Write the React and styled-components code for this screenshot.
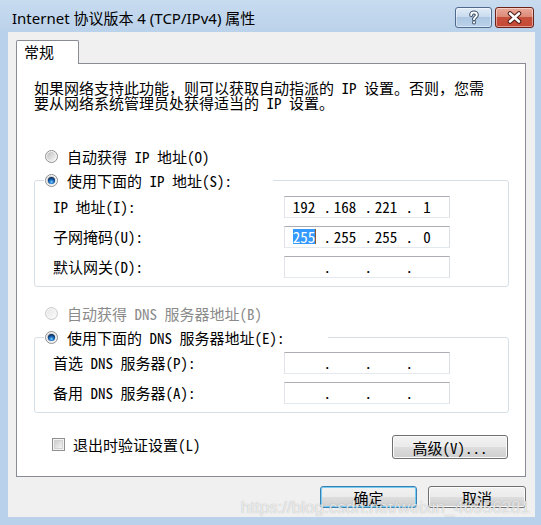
import React from 'react';
import styled, { createGlobalStyle } from 'styled-components';

const uiFont = `"Noto Sans Mono CJK SC", "Noto Sans CJK SC", monospace`;

const GlobalStyle = createGlobalStyle`
  html, body { margin: 0; padding: 0; }
  body { background: #b9d1ea; }
`;

const Window = styled.div`
  position: relative;
  width: 541px;
  height: 525px;
  display: flex;
  flex-direction: column;
  background: #b9d1ea;
  font-family: ${uiFont};
  font-size: 15px;
  color: #000;
  overflow: hidden;
`;

const TitleBar = styled.div`
  height: 32px;
  flex-shrink: 0;
  display: flex;
  justify-content: space-between;
  background: linear-gradient(#c8dbef, #bad2ea);
`;

const Title = styled.div`
  padding: 7px 0 0 12px;
  font-family: "Noto Sans", "Noto Sans CJK SC", sans-serif;
  font-size: 15px;
  line-height: 22px;
`;

const CaptionButtons = styled.div`
  display: flex;
  align-items: flex-start;
  gap: 3px;
  margin: 7px 7px 0 0;
`;

const CaptionButton = styled.div`
  width: ${p => p.$w}px;
  height: 21px;
  box-sizing: border-box;
  display: flex;
  align-items: center;
  justify-content: center;
  border-radius: 3px;
  border: 1px solid ${p => (p.$close ? '#6b2219' : '#4f6a8c')};
  background: ${p =>
    p.$close
      ? 'linear-gradient(#eaa99a 0%, #dd8b79 45%, #c7503d 50%, #c54934 100%)'
      : 'linear-gradient(#e2ecf7 0%, #c9dcef 45%, #aec7e2 50%, #b9d1ea 100%)'};
  box-shadow: inset 0 0 0 1px rgba(255, 255, 255, 0.45);
`;

const Client = styled.div`
  flex: 1;
  margin: 0 6px 8px 8px;
  padding: 8px 9px 0 8px;
  background: #f0f0f0;
  display: flex;
  flex-direction: column;
`;

const TabStrip = styled.div`
  display: flex;
  height: 23px;
`;

const Tab = styled.div`
  position: relative;
  z-index: 1;
  width: 63px;
  height: 24px;
  box-sizing: border-box;
  padding-left: 7px;
  border: 1px solid #898c95;
  border-bottom: none;
  border-radius: 2px 2px 0 0;
  background: #fff;
  line-height: 21px;
`;

const Panel = styled.div`
  height: 414px;
  box-sizing: border-box;
  border: 1px solid #898c95;
  background: #fff;
  padding: 16px 16px 0 17px;
  display: flex;
  flex-direction: column;
`;

const Description = styled.p`
  margin: 0;
  line-height: 15px;
`;

const OptionRow = styled.label`
  display: flex;
  align-items: center;
  gap: 9px;
  height: ${p => p.$h || 23}px;
  margin-top: ${p => p.$mt || 0}px;
  margin-left: ${p => p.$ml || 0}px;
  color: ${p => (p.$disabled ? '#8b8b8b' : '#000')};
  white-space: nowrap;
`;

const Group = styled.fieldset`
  margin: 0;
  padding: ${p => p.$pt}px 0 8px 0;
  min-width: 0;
  border: 1px solid #d5dfe5;
  border-radius: 3px;
`;

const Legend = styled.legend`
  margin-left: 9px;
  padding: 0 ${p => p.$pr}px 0 1px;
`;

const FieldGrid = styled.div`
  display: grid;
  grid-template-columns: 231px 166px;
  row-gap: 8px;
  align-items: center;
  padding-left: 18px;
`;

const FieldLabel = styled.span`
  line-height: 22px;
  white-space: nowrap;
`;

const IpBox = styled.div`
  width: 166px;
  height: 22px;
  box-sizing: border-box;
  display: flex;
  align-items: center;
  padding-left: 5px;
  border: 1px solid;
  border-color: #abadb3 #dbdfe6 #e3e9ef #e2e3ea;
  background: #fff;
  line-height: 20px;
`;

const Octet = styled.span`
  width: 28px;
  text-align: center;
`;

const Dot = styled.span`
  width: 13px;
  text-align: right;
`;

const Selected = styled.span`
  display: inline-block;
  line-height: 15px;
  background: #3399ff;
  color: #fff;
  box-shadow: 1px 0 0 #8b5a2b;
`;

const PanelFooter = styled.div`
  margin-top: 22px;
  padding: 0 1px 0 18px;
  display: flex;
  justify-content: space-between;
  align-items: flex-start;
`;

const CheckRow = styled.label`
  display: flex;
  align-items: center;
  gap: 8px;
  height: 16px;
  margin-top: 1px;
`;

const Button = styled.div`
  width: ${p => p.$w}px;
  height: ${p => p.$h}px;
  box-sizing: border-box;
  display: flex;
  align-items: center;
  justify-content: center;
  border: 1px solid ${p => (p.$default ? '#3c7fb1' : '#707070')};
  border-radius: 3px;
  background: linear-gradient(#f2f2f2 0%, #ebebeb 50%, #dddddd 51%, #cfcfcf 100%);
  box-shadow: inset 0 0 0 1px ${p => (p.$default ? '#74cdf5' : '#fbfbfb')};
  line-height: 1;
`;

const ButtonRow = styled.div`
  margin-top: 9px;
  display: flex;
  justify-content: flex-end;
  gap: 11px;
`;

const Watermark = styled.div`
  position: absolute;
  right: 11px;
  bottom: 9px;
  font-family: "Liberation Sans", Arial, sans-serif;
  font-size: 17px;
  line-height: 1;
  color: rgba(255, 255, 255, 0.72);
  text-shadow: 0 0 1px rgba(110, 110, 110, 0.55);
  pointer-events: none;
  white-space: nowrap;
`;

const Radio = ({ checked, disabled }) => (
  <svg width="13" height="13" viewBox="0 0 13 13" style={{ flexShrink: 0 }}>
    <defs>
      <linearGradient id="radioIn" x1="0" y1="0" x2="1" y2="1">
        <stop offset="0" stopColor="#bdbdbd" />
        <stop offset="1" stopColor="#fafafa" />
      </linearGradient>
      <linearGradient id="radioInOff" x1="0" y1="0" x2="1" y2="1">
        <stop offset="0" stopColor="#e6e6e6" />
        <stop offset="1" stopColor="#fbfbfb" />
      </linearGradient>
      <radialGradient id="radioDot" cx="0.5" cy="0.7" r="0.6">
        <stop offset="0" stopColor="#7fd6ff" />
        <stop offset="0.45" stopColor="#1f74c9" />
        <stop offset="1" stopColor="#0b2d5c" />
      </radialGradient>
    </defs>
    <circle cx="6.5" cy="6.5" r="6" fill="#f4f4f4" stroke={disabled ? '#c9c9c9' : '#8e8f8f'} />
    <circle cx="6.5" cy="6.5" r="4.5" fill={disabled ? 'url(#radioInOff)' : 'url(#radioIn)'} />
    {checked && <circle cx="6.5" cy="6.5" r="3.6" fill="url(#radioDot)" />}
  </svg>
);

const CheckBox = () => (
  <svg width="13" height="13" viewBox="0 0 13 13" style={{ flexShrink: 0 }}>
    <defs>
      <linearGradient id="checkIn" x1="0" y1="0" x2="1" y2="1">
        <stop offset="0" stopColor="#cbcbcb" />
        <stop offset="1" stopColor="#f7f7f7" />
      </linearGradient>
    </defs>
    <rect x="0.5" y="0.5" width="12" height="12" fill="#f4f4f4" stroke="#8e8f8f" />
    <rect x="2.5" y="2.5" width="8" height="8" fill="url(#checkIn)" stroke="#d2d2d2" />
  </svg>
);

const HelpGlyph = () => (
  <svg width="14" height="15" viewBox="0 0 14 15">
    <g fill="none" strokeLinecap="round" strokeLinejoin="round">
      <path d="M4.2 5 C4.2 1.8 9.8 1.8 9.8 5 C9.8 7.2 7 7.3 7 9.3" stroke="#3a4f69" strokeWidth="4" />
      <path d="M4.2 5 C4.2 1.8 9.8 1.8 9.8 5 C9.8 7.2 7 7.3 7 9.3" stroke="#fff" strokeWidth="2" />
    </g>
    <circle cx="7" cy="12.4" r="2" fill="#3a4f69" />
    <circle cx="7" cy="12.4" r="1.1" fill="#fff" />
  </svg>
);

const CloseGlyph = () => (
  <svg width="15" height="13" viewBox="0 0 15 13">
    <g fill="none" strokeLinecap="round">
      <path d="M3 2.5 L12 10.5 M12 2.5 L3 10.5" stroke="#4a1a14" strokeWidth="4.6" />
      <path d="M3 2.5 L12 10.5 M12 2.5 L3 10.5" stroke="#fff" strokeWidth="2.6" />
    </g>
  </svg>
);

const IpField = ({ octets = ['', '', '', ''], selectFirst }) => (
  <IpBox>
    {octets.map((o, i) => (
      <React.Fragment key={i}>
        <Octet>{i === 0 && selectFirst ? <Selected>{o}</Selected> : o}</Octet>
        {i < 3 && <Dot>.</Dot>}
      </React.Fragment>
    ))}
  </IpBox>
);

export default function App() {
  return (
    <>
      <GlobalStyle />
      <Window>
        <TitleBar>
          <Title>Internet 协议版本 4 (TCP/IPv4) 属性</Title>
          <CaptionButtons>
            <CaptionButton $w={37}><HelpGlyph /></CaptionButton>
            <CaptionButton $w={39} $close><CloseGlyph /></CaptionButton>
          </CaptionButtons>
        </TitleBar>

        <Client>
          <TabStrip>
            <Tab>常规</Tab>
          </TabStrip>
          <Panel>
            <Description>
              如果网络支持此功能，则可以获取自动指派的 IP 设置。否则，您需
              <br />
              要从网络系统管理员处获得适当的 IP 设置。
            </Description>

            <OptionRow $mt={35} $ml={11}>
              <Radio />
              自动获得 IP 地址(O)
            </OptionRow>
            <Group $pt={4}>
              <Legend $pr={41}>
                <OptionRow $h={24}>
                  <Radio checked />
                  使用下面的 IP 地址(S):
                </OptionRow>
              </Legend>
              <FieldGrid>
                <FieldLabel>IP 地址(I):</FieldLabel>
                <IpField octets={['192', '168', '221', '1']} />
                <FieldLabel>子网掩码(U):</FieldLabel>
                <IpField octets={['255', '255', '255', '0']} selectFirst />
                <FieldLabel>默认网关(D):</FieldLabel>
                <IpField />
              </FieldGrid>
            </Group>

            <OptionRow $mt={15} $ml={11} $disabled>
              <Radio disabled />
              自动获得 DNS 服务器地址(B)
            </OptionRow>
            <Group $pt={3}>
              <Legend $pr={43}>
                <OptionRow $h={24}>
                  <Radio checked />
                  使用下面的 DNS 服务器地址(E):
                </OptionRow>
              </Legend>
              <FieldGrid>
                <FieldLabel>首选 DNS 服务器(P):</FieldLabel>
                <IpField />
                <FieldLabel>备用 DNS 服务器(A):</FieldLabel>
                <IpField />
              </FieldGrid>
            </Group>

            <PanelFooter>
              <CheckRow>
                <CheckBox />
                退出时验证设置(L)
              </CheckRow>
              <Button $w={116} $h={24}>高级(V)...</Button>
            </PanelFooter>
          </Panel>

          <ButtonRow>
            <Button $w={97} $h={22} $default>确定</Button>
            <Button $w={98} $h={22}>取消</Button>
          </ButtonRow>
        </Client>

        <Watermark>https://blog.csdn.net/weixin_46956281</Watermark>
      </Window>
    </>
  );
}
